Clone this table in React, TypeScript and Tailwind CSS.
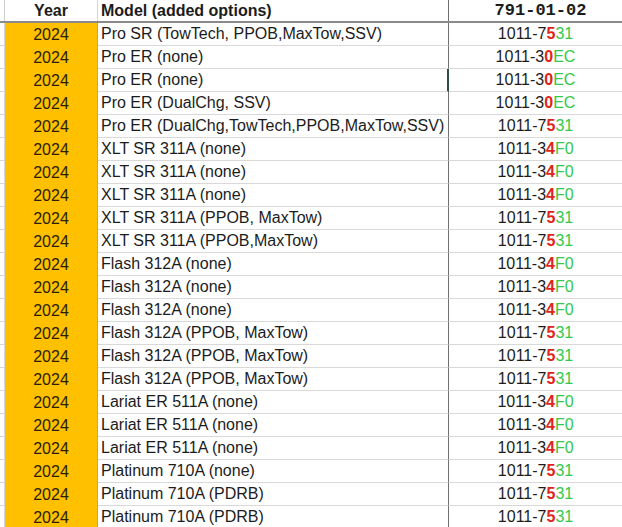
import React from "react";

type Row = { model: string; a: string; b: string; c: string };

const rows: Row[] = [
  { model: "Pro SR (TowTech, PPOB,MaxTow,SSV)", a: "1011-7", b: "5", c: "31" },
  { model: "Pro ER (none)", a: "1011-3", b: "0", c: "EC" },
  { model: "Pro ER (none)", a: "1011-3", b: "0", c: "EC" },
  { model: "Pro ER (DualChg, SSV)", a: "1011-3", b: "0", c: "EC" },
  { model: "Pro ER (DualChg,TowTech,PPOB,MaxTow,SSV)", a: "1011-7", b: "5", c: "31" },
  { model: "XLT SR 311A (none)", a: "1011-3", b: "4", c: "F0" },
  { model: "XLT SR 311A (none)", a: "1011-3", b: "4", c: "F0" },
  { model: "XLT SR 311A (none)", a: "1011-3", b: "4", c: "F0" },
  { model: "XLT SR 311A (PPOB, MaxTow)", a: "1011-7", b: "5", c: "31" },
  { model: "XLT SR 311A (PPOB,MaxTow)", a: "1011-7", b: "5", c: "31" },
  { model: "Flash 312A (none)", a: "1011-3", b: "4", c: "F0" },
  { model: "Flash 312A (none)", a: "1011-3", b: "4", c: "F0" },
  { model: "Flash 312A (none)", a: "1011-3", b: "4", c: "F0" },
  { model: "Flash 312A (PPOB, MaxTow)", a: "1011-7", b: "5", c: "31" },
  { model: "Flash 312A (PPOB, MaxTow)", a: "1011-7", b: "5", c: "31" },
  { model: "Flash 312A (PPOB, MaxTow)", a: "1011-7", b: "5", c: "31" },
  { model: "Lariat ER 511A (none)", a: "1011-3", b: "4", c: "F0" },
  { model: "Lariat ER 511A (none)", a: "1011-3", b: "4", c: "F0" },
  { model: "Lariat ER 511A (none)", a: "1011-3", b: "4", c: "F0" },
  { model: "Platinum 710A (none)", a: "1011-7", b: "5", c: "31" },
  { model: "Platinum 710A (PDRB)", a: "1011-7", b: "5", c: "31" },
  { model: "Platinum 710A (PDRB)", a: "1011-7", b: "5", c: "31" },
];

export default function App() {
  return (
    <div
      className="w-[622px] h-[527px] overflow-hidden bg-white text-[16px] text-[#1c1c1c]"
      style={{ fontFamily: '"Liberation Sans", Arial, sans-serif' }}
    >
      {/* header */}
      <div className="flex h-[23px] border-b-2 border-[#8a8a8a]">
        <div className="w-[5px] border-r border-[#cfcfcf]" />
        <div className="w-[93px] border-r border-[#d6d6d6] flex items-center justify-center font-bold leading-none">
          Year
        </div>
        <div className="w-[351px] border-r border-[#6e6e6e] flex items-center pl-[3px] font-bold leading-none">
          Model (added options)
        </div>
        <div
          className="flex-1 flex items-center justify-center pl-[10px] font-bold leading-none text-[17px]"
          style={{ fontFamily: '"Liberation Mono", "DejaVu Sans Mono", monospace' }}
        >
          791-01-02
        </div>
      </div>
      {rows.map((r, i) => (
        <div key={i} className="flex h-[23px]">
          <div className="w-[5px] border-r border-b border-[#d6d6d6]" />
          <div className="w-[93px] bg-[#ffc000] border-r border-[#e0a800] flex items-center justify-center leading-none text-[#2a1e00]">
            2024
          </div>
          <div
            className={
              i === 2
                ? "w-[351px] border-b border-[#d9d9d9] border-r-2 border-r-[#2f4f44] flex items-center pl-[3px] leading-none whitespace-nowrap"
                : "w-[351px] border-b border-[#d9d9d9] border-r border-r-[#707070] flex items-center pl-[3px] leading-none whitespace-nowrap"
            }
          >
            {r.model}
          </div>
          <div className="flex-1 border-b border-[#d9d9d9] flex items-center justify-center leading-none">
            <span>{r.a}</span>
            <span className="font-bold text-[#e0231b]">{r.b}</span>
            <span className="text-[#33c84a]">{r.c}</span>
          </div>
        </div>
      ))}
    </div>
  );
}
